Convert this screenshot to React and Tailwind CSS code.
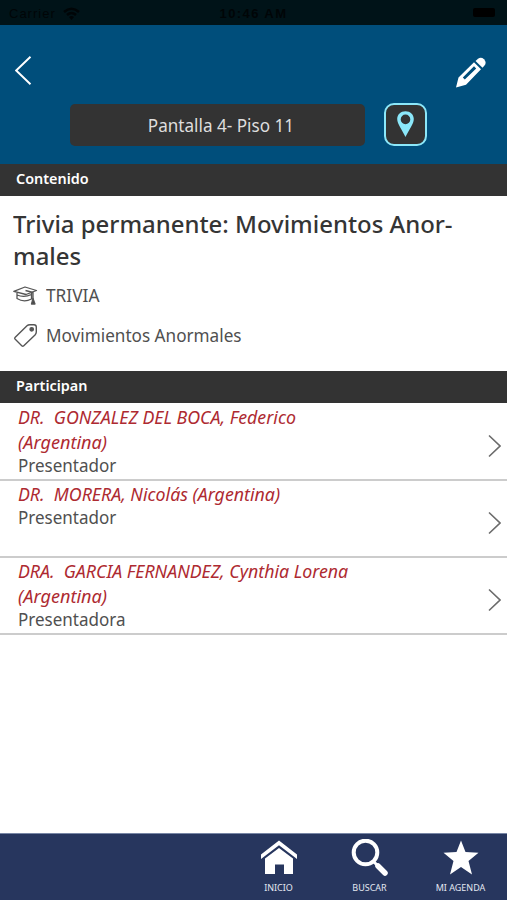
function Chevron() {
  return (
    <svg className="mr-[6px] h-[24px] w-[13px] shrink-0" viewBox="0 0 13 24" fill="none" stroke="#6b6b6b" strokeWidth="1.6">
      <path d="M1 1.5 12 12 1 22.5" />
    </svg>
  );
}

function SectionBar({ children }) {
  return (
    <div className="flex h-[32px] shrink-0 items-center bg-[#333333] pb-[3px] pl-4 text-[15px] font-semibold text-white">
      <span className="inline-block origin-left scale-x-[0.96]">{children}</span>
    </div>
  );
}

function Person({ lines, role }) {
  return (
    <div className="flex h-[77px] shrink-0 items-center justify-between border-b-2 border-[#cccccc]">
      <div className="h-full pl-[18px]">
        {lines.map((line) => (
          <p key={line.text} className="h-[25px] whitespace-pre text-[18px] italic leading-[26px] text-[#ae2a31]">
            <span className={"inline-block origin-left " + line.fit}>{line.text}</span>
          </p>
        ))}
        <p className="h-[23px] text-[18px] leading-[23px] text-[#505050]">
          <span className="inline-block origin-left scale-x-[0.945]">{role}</span>
        </p>
      </div>
      <div className="pt-[9px]"><Chevron /></div>
    </div>
  );
}

function Tab({ label, children }) {
  return (
    <div className="flex w-[91px] flex-col items-center pt-[5px]">
      <svg className="h-[38px] w-[38px]" viewBox="0 0 38 38" fill="#fff">{children}</svg>
      <span className="mt-[4px] whitespace-nowrap text-[9px] leading-[14px] text-[#e3e7f0]">{label}</span>
    </div>
  );
}

export default function App() {
  return (
    <div className="flex h-[900px] w-[507px] flex-col overflow-hidden bg-white font-['Noto_Sans',sans-serif]">
      <div className="grid h-[25px] shrink-0 grid-cols-3 items-center bg-[#001318] px-[9px] font-['Liberation_Sans',sans-serif] text-[13px] text-[#000507]">
        <div className="flex items-center gap-[7px] pt-[2px]">
          <span className="tracking-[1px]">Carrier</span>
          <svg className="h-[13px] w-[17px]" viewBox="0 0 17 13" fill="none" stroke="#000507" strokeWidth="2.5">
            <path d="M1 5Q8.500-1.500 16 5M4 8Q8.500 4 13 8" />
            <path d="M8.500 13 6 10Q8.500 8 11 10Z" fill="#000507" stroke="none" />
          </svg>
        </div>
        <span className="whitespace-nowrap pt-[3px] text-center font-bold tracking-[1.4px]">10:46 AM</span>
        <span className="mr-[3px] h-[9px] w-[22px] justify-self-end rounded-[2px] bg-black" />
      </div>

      <header className="h-[139px] shrink-0 bg-[#004e7b]">
        <div className="flex h-[79px] items-start justify-between pl-[15px] pr-[21px] pt-[31px]">
          <svg className="h-[29px] w-[17px]" viewBox="0 0 17 29" fill="none" stroke="#fff" strokeWidth="1.9">
            <path d="M15.500.8 1.200 14.500 15.500 28.200" />
          </svg>
          <svg className="mt-px h-[31px] w-[31px]" viewBox="0 0 31 31" fill="#fff">
            <path fillRule="evenodd" d="M1 30.500 3.500 20.500 19 5.200 26 12.200 11 27.700ZM7.800 20.600 9.800 22.600 21.200 11.500 19 9.300Z" />
            <path d="M20.500 4 23 1.700Q26-.5 29 2.200 32 5.500 29.500 8.500L27.500 10.700Z" />
          </svg>
        </div>
        <div className="flex pl-[70px]">
          <div className="flex h-[42px] w-[295px] items-center justify-center rounded-[5px] bg-[#333333] pl-[6px] text-[18px] text-[#dedede]">
            <span className="inline-block whitespace-nowrap scale-x-[0.95]">Pantalla 4- Piso 11</span>
          </div>
          <div className="-mt-px ml-[19px] flex h-[43px] w-[43px] items-center justify-center rounded-[10px] border-2 border-[#8be7f9] bg-[#333333]">
            <svg className="mb-px h-[26px] w-[17px]" viewBox="0 0 17 26">
              <path fillRule="evenodd" fill="#8be7f9" d="M8.500.2C3.700.2.200 3.500.2 8c0 5 5 11 8.300 18 3.300-7 8.300-13 8.300-18 0-4.500-3.500-7.800-8.300-7.800Zm0 3.400a4.800 4.800 0 1 1 0 9.600 4.800 4.800 0 0 1 0-9.600Z" />
            </svg>
          </div>
        </div>
      </header>

      <SectionBar>Contenido</SectionBar>
      <section className="h-[175px] shrink-0 pl-[13px] pt-[12px] text-[#505050]">
        <h1 className="text-[24px] font-medium leading-[32px] text-[#353535]">
          <span className="block origin-left whitespace-nowrap scale-x-[0.996]">Trivia permanente: Movimientos Anor-</span>
          <span className="block origin-left scale-x-[0.996]">males</span>
        </h1>
        <div className="mt-[7px] flex h-[32px] items-center text-[18px]">
          <svg className="mr-[8px] h-[19px] w-[25px]" viewBox="0 0 25 19" fill="none" stroke="#555" strokeWidth="1.3" strokeLinejoin="round">
            <path d="M.8 5.300 12 1 23.500 4.500 13 8.500Z" />
            <path d="M4 7V12.500Q11 17 18.500 13V7M4 9Q11 12 18.500 8.500M12.500 4.500 20 6.500V13" />
            <path d="M20 12.500 22 18H18.500Z" fill="#444" />
          </svg>
          <span className="inline-block origin-left scale-x-[0.96]">TRIVIA</span>
        </div>
        <div className="mt-[8px] flex h-[32px] items-center text-[18px]">
          <svg className="mr-[8px] h-[25px] w-[25px]" viewBox="0 0 25 25" fill="none" stroke="#555" strokeWidth="1.4" strokeLinejoin="round">
            <path d="M2 14.500 14 2.700Q15 1.700 17 1.700H21Q23.300 1.700 23.300 4V9Q23.300 10.500 22 12L10.500 23Q9.800 23.600 9 23L2 16Q1.300 15.200 2 14.500Z" />
            <circle cx="18.700" cy="6.300" r="1.700" fill="#555" />
          </svg>
          <span className="inline-block origin-left whitespace-nowrap scale-x-[0.952]">Movimientos Anormales</span>
        </div>
      </section>
      <SectionBar>Participan</SectionBar>

      <main className="flex min-h-0 flex-1 flex-col pt-px">
        <Person
          lines={[
            { text: "DR.  GONZALEZ DEL BOCA, Federico", fit: "scale-x-[0.988]" },
            { text: "(Argentina)", fit: "scale-x-[1.005]" },
          ]}
          role="Presentador"
        />
        <Person lines={[{ text: "DR.  MORERA, Nicolás (Argentina)", fit: "scale-x-[0.988]" }]} role="Presentador" />
        <Person
          lines={[
            { text: "DRA.  GARCIA FERNANDEZ, Cynthia Lorena", fit: "scale-x-[0.987]" },
            { text: "(Argentina)", fit: "scale-x-[1.005]" },
          ]}
          role="Presentadora"
        />
      </main>

      <nav className="flex h-[67px] shrink-0 justify-end border-t border-[#7886a5] bg-[#27365e] pr-px">
        <Tab label="INICIO">
          <path d="M19 1.500 37 15.500V20L19 6.200 1 20V15.500Z" />
          <path d="M19 9 33 19.500V35H24V25.500H15V35H5V19.500Z" />
        </Tab>
        <Tab label="BUSCAR">
          <circle cx="14.500" cy="13.500" r="11.800" fill="none" stroke="#fff" strokeWidth="4" />
          <path d="M22 22 27 27" stroke="#fff" strokeWidth="3" />
          <path d="M27 27 34 34" stroke="#fff" strokeWidth="5.500" strokeLinecap="round" />
        </Tab>
        <Tab label="MI AGENDA">
          <path d="M19 1.500 23.500 13 36.500 13.700 26.500 22 30 35.500 19 28 8 35.500 11.500 22 1.500 13.700 14.500 13Z" />
        </Tab>
      </nav>
    </div>
  );
}
